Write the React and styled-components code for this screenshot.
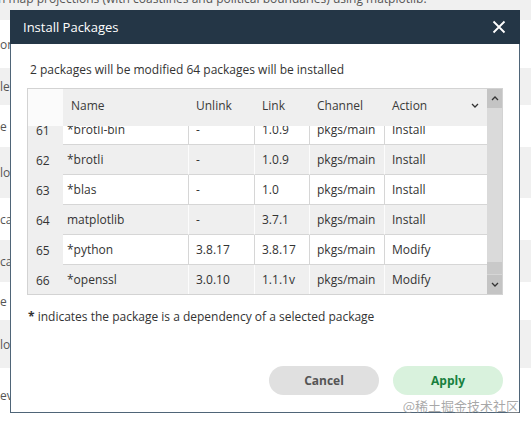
import React from 'react';
import styled, { createGlobalStyle } from 'styled-components';

const GlobalStyle = createGlobalStyle`
    html, body {
        margin: 0;
        padding: 0;
    }
    body {
        font-family: "Open Sans", "Noto Sans", sans-serif;
        background: #fff;
        overflow: hidden;
    }
`;

const Page = styled.div`
    position: relative;
    width: 531px;
    height: 423px;
    overflow: hidden;
`;

// the list that sits behind the modal
const Backdrop = styled.div`
    display: flex;
    flex-direction: column;
`;

const BackRow = styled.div`
    height: ${props => props.h}px;
    background: ${props => (props.gray ? '#f0f0f0' : '#fff')};
    display: flex;
    align-items: ${props => (props.top ? 'flex-start' : 'center')};
    font-size: 12px;
    color: #555;
    white-space: nowrap;
`;

const BackText = styled.span`
    margin-top: ${props => (props.top ? '-10px' : '0')};
    margin-left: ${props => (props.top ? '-2px' : '0')};
`;

const Dialog = styled.div`
    position: absolute;
    top: 10px;
    left: 10px;
    width: 510px;
    height: 403px;
    box-sizing: border-box;
    border: 1px solid #4f6578;
    border-top: none;
    background: #fff;
    display: flex;
    flex-direction: column;
`;

const Header = styled.div`
    height: 34px;
    margin: 0 -1px;
    background: #243646;
    display: flex;
    align-items: center;
    justify-content: space-between;
    padding: 0 14px 0 13px;
`;

const Title = styled.div`
    color: #fff;
    font-size: 13px;
`;

const CloseButton = styled.button`
    border: none;
    background: transparent;
    padding: 0;
    width: 14px;
    height: 14px;
    display: flex;
    cursor: pointer;
`;

const Body = styled.div`
    flex: 1;
    display: flex;
    flex-direction: column;
    padding: 18px 16px 17px 16px;
`;

const Info = styled.div`
    font-size: 12px;
    line-height: 16px;
    color: #333;
    margin: 0 0 10px 3px;
`;

const Table = styled.div`
    border: 1px solid #d3d3d3;
    display: grid;
    grid-template-columns: 1fr 15px;
`;

const Main = styled.div`
    display: flex;
    flex-direction: column;
    min-width: 0;
`;

const columns = '35px 125px 66px 55px 75px 103px';

const HeadRow = styled.div`
    display: grid;
    grid-template-columns: ${columns};
    height: 37px;
    background: #efefef;
    position: relative;
    z-index: 1;
`;

const Corner = styled.div`
    background: #fbfbfb;
`;

const HeadCell = styled.div`
    display: flex;
    align-items: center;
    justify-content: space-between;
    padding: 0 8px 4px 8px;
    font-size: 12px;
    color: #3a3a3a;
`;

const Viewport = styled.div`
    height: 168px;
    overflow: hidden;
`;

const Rows = styled.div`
    margin-top: -11px;
`;

const Row = styled.div`
    display: grid;
    grid-template-columns: ${columns};
    height: 30px;
    background: ${props => (props.odd ? '#efefef' : '#fff')};
`;

const NumCell = styled.div`
    background: #efefef;
    display: flex;
    align-items: center;
    padding-left: 8px;
    font-size: 12px;
    color: #333;
`;

const Cell = styled.div`
    display: flex;
    align-items: center;
    padding-left: ${props => (props.first ? '4px' : '7px')};
    font-size: 12px;
    color: #333;
    border-bottom: 1px solid #d6d6d6;
    border-left: ${props => (props.first ? 'none' : `1px solid ${props.odd ? '#fcfcfc' : '#d6d6d6'}`)};
    white-space: nowrap;
    overflow: hidden;
`;

const Scrollbar = styled.div`
    display: flex;
    flex-direction: column;
    background: #dadada;
`;

const ScrollButton = styled.div`
    height: 19px;
    background: #c4c4c4;
    display: flex;
    align-items: center;
    justify-content: center;
`;

const Track = styled.div`
    flex: 1;
    display: flex;
    flex-direction: column;
    justify-content: flex-end;
`;

const Thumb = styled.div`
    height: 12px;
    background: #c9c9c9;
    border-bottom: 1px solid #d6d6d6;
`;

const Footnote = styled.div`
    margin: 14px 0 0 1px;
    font-size: 12px;
    line-height: 16px;
    color: #333;
`;

const Star = styled.span`
    font-weight: 700;
`;

const Footer = styled.div`
    margin-top: auto;
    display: flex;
    justify-content: flex-end;
    gap: 14px;
`;

const PillButton = styled.button`
    width: 110px;
    height: 29px;
    border: none;
    border-radius: 15px;
    background: ${props => (props.primary ? '#d9f2dd' : '#e0e0e0')};
    color: ${props => (props.primary ? '#18803e' : '#555')};
    font-family: "Open Sans", sans-serif;
    font-size: 12px;
    font-weight: 700;
    cursor: pointer;
`;

const Watermark = styled.div`
    position: absolute;
    right: 12px;
    top: 396px;
    font-family: "Noto Sans CJK SC", sans-serif;
    font-size: 13px;
    color: rgba(140, 140, 140, 0.75);
`;

const Chevron = ({ up, color = '#333' }) => (
    <svg width="8" height="5" viewBox="0 0 8 5">
        <polyline
            points={up ? '1,4 4,1 7,4' : '1,1 4,4 7,1'}
            fill="none"
            stroke={color}
            strokeWidth="1.3"
        />
    </svg>
);

const backRows = [
    { h: 20, gray: true, top: true, text: 'n map projections (with coastlines and political boundaries) using matplotlib.' },
    { h: 48, text: 'on' },
    { h: 37, gray: true, text: 'le' },
    { h: 42, text: 'e' },
    { h: 51, gray: true, text: 'lo' },
    { h: 42, text: 'ca' },
    { h: 42, gray: true, text: 'ca' },
    { h: 38, text: 'e n' },
    { h: 48, gray: true, text: 'lo' },
    { h: 55, text: 'ev' },
];

const packages = [
    { n: 61, name: '*brotli-bin', unlink: '-', link: '1.0.9', channel: 'pkgs/main', action: 'Install' },
    { n: 62, name: '*brotli', unlink: '-', link: '1.0.9', channel: 'pkgs/main', action: 'Install' },
    { n: 63, name: '*blas', unlink: '-', link: '1.0', channel: 'pkgs/main', action: 'Install' },
    { n: 64, name: 'matplotlib', unlink: ' -', link: '3.7.1', channel: 'pkgs/main', action: 'Install' },
    { n: 65, name: '*python', unlink: '3.8.17', link: '3.8.17', channel: 'pkgs/main', action: 'Modify' },
    { n: 66, name: '*openssl', unlink: '3.0.10', link: '1.1.1v', channel: 'pkgs/main', action: 'Modify' },
];

const App = () => {
    return (
        <Page>
            <GlobalStyle />
            <Backdrop>
                {backRows.map((r, i) => (
                    <BackRow key={i} h={r.h} gray={r.gray} top={r.top}>
                        <BackText top={r.top}>{r.text}</BackText>
                    </BackRow>
                ))}
            </Backdrop>

            <Dialog>
                <Header>
                    <Title>Install Packages</Title>
                    <CloseButton aria-label="close">
                        <svg width="14" height="14" viewBox="0 0 14 14">
                            <path d="M1.5 1.5 L12.5 12.5 M12.5 1.5 L1.5 12.5" stroke="#fff" strokeWidth="1.8" />
                        </svg>
                    </CloseButton>
                </Header>
                <Body>
                    <Info>2 packages will be modified 64 packages will be installed</Info>
                    <Table>
                        <Main>
                            <HeadRow>
                                <Corner />
                                <HeadCell>Name</HeadCell>
                                <HeadCell>Unlink</HeadCell>
                                <HeadCell>Link</HeadCell>
                                <HeadCell>Channel</HeadCell>
                                <HeadCell>
                                    Action
                                    <Chevron />
                                </HeadCell>
                            </HeadRow>
                            <Viewport>
                                <Rows>
                                    {packages.map((p, i) => {
                                        const odd = i % 2 === 1;
                                        return (
                                            <Row key={p.n} odd={odd}>
                                                <NumCell>{p.n}</NumCell>
                                                <Cell first odd={odd}>{p.name}</Cell>
                                                <Cell odd={odd}>{p.unlink}</Cell>
                                                <Cell odd={odd}>{p.link}</Cell>
                                                <Cell odd={odd}>{p.channel}</Cell>
                                                <Cell odd={odd}>{p.action}</Cell>
                                            </Row>
                                        );
                                    })}
                                </Rows>
                            </Viewport>
                        </Main>
                        <Scrollbar>
                            <ScrollButton>
                                <Chevron up />
                            </ScrollButton>
                            <Track>
                                <Thumb />
                            </Track>
                            <ScrollButton>
                                <Chevron />
                            </ScrollButton>
                        </Scrollbar>
                    </Table>
                    <Footnote>
                        <Star>*</Star> indicates the package is a dependency of a selected package
                    </Footnote>
                    <Footer>
                        <PillButton>Cancel</PillButton>
                        <PillButton primary>Apply</PillButton>
                    </Footer>
                </Body>
            </Dialog>
            <Watermark>@稀土掘金技术社区</Watermark>
        </Page>
    );
};

export default App;
